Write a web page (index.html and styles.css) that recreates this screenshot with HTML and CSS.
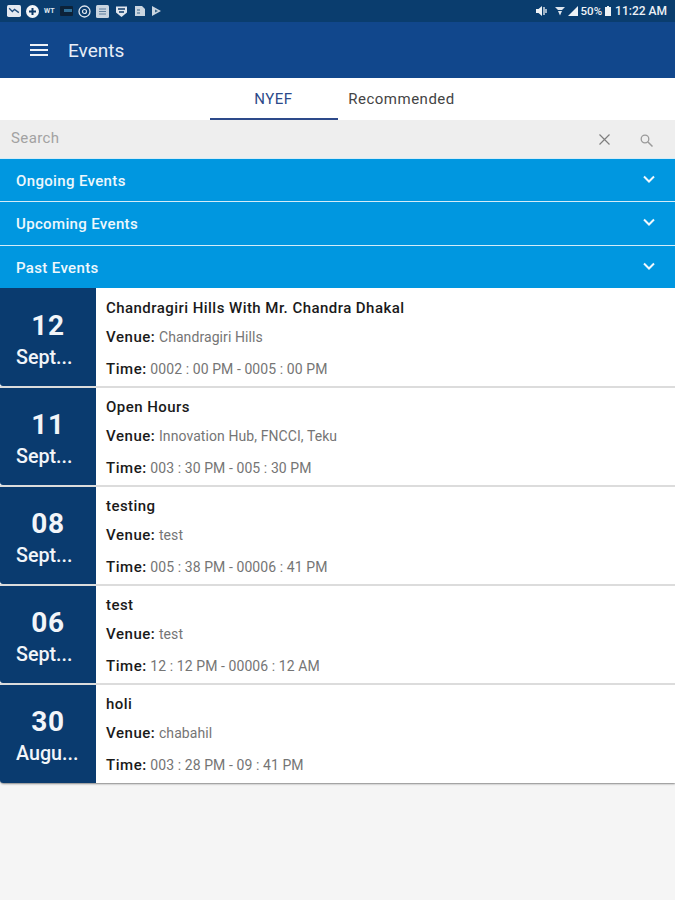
FILE: index.html
```html
<!DOCTYPE html>
<html lang="en">
<head>
<meta charset="utf-8">
<title>Events</title>
<link rel="stylesheet" href="styles.css">
</head>
<body>
<div class="status">
  <div class="status-icons">
    <svg class="si" width="14" height="12" viewBox="0 0 13 11"><rect x="0" y="0" width="13" height="11" rx="1.5" fill="#e4e9f0"/><path d="M2 3l3 3 2-2 4 3" stroke="#1f4c7c" fill="none" stroke-width="1.2"/></svg>
    <svg class="si" width="13" height="13" viewBox="0 0 13 13"><circle cx="6.5" cy="6.5" r="6.5" fill="#f2f5f8"/><path d="M6.5 3v7M3 6.5h7" stroke="#0c3a68" stroke-width="2"/></svg>
    <span class="wt">WT</span>
    <svg class="si" width="13" height="10" viewBox="0 0 13 10"><rect width="13" height="10" rx="1" fill="#0c2238"/><rect x="4" y="3" width="8" height="3" fill="#2f6f98"/></svg>
    <svg class="si" width="13" height="13" viewBox="0 0 13 13"><circle cx="6.5" cy="6.5" r="5.5" fill="none" stroke="#dfe6ee" stroke-width="1.3"/><circle cx="6.5" cy="6.5" r="2" fill="none" stroke="#dfe6ee" stroke-width="1.2"/></svg>
    <svg class="si" width="13" height="13" viewBox="0 0 13 13"><rect width="13" height="13" rx="1.5" fill="#c9d5e0"/><path d="M3 4h7M3 6.5h7M3 9h7" stroke="#5f7f9e"/></svg>
    <svg class="si" width="15" height="13" viewBox="0 0 13 13"><path d="M1 1.5h11v6L6.5 12 1 7.500z" fill="#dfe6ee"/><path d="M3 4h7M4 7h5" stroke="#0c3a68" stroke-width="1.3"/></svg>
    <svg class="si" width="12" height="12" viewBox="0 0 12 12"><path d="M1 1h7l3 3v7H1z" fill="#c9d5e0"/><path d="M3 5h3M3 8h3" stroke="#386488"/></svg>
    <svg class="si" width="11" height="12" viewBox="0 0 11 12"><path d="M1 1l9 5-9 5z" fill="#c9d5e0"/><path d="M4 4.500l3 1.500-3 1.500z" fill="#386488"/></svg>
  </div>
  <div class="status-right">
    <svg width="11" height="10" viewBox="0 0 11 10"><path d="M0 3h2.500L6 0v10L2.500 7H0z" fill="#eef2f6"/><path d="M8 1v8M10 3v4" stroke="#eef2f6" stroke-width="1.300"/></svg>
    <svg class="wifi" width="10" height="10" viewBox="0 0 10 10"><path d="M0 1h10L7 4H3zM3 5h4L5 9.500z" fill="#dfe6ee"/></svg>
    <svg width="10" height="10" viewBox="0 0 10 10"><path d="M0 10L10 0v10z" fill="#eef2f6"/></svg>
    <span>50%</span>
    <svg width="6" height="10" viewBox="0 0 6 10"><path d="M2 0h2v1h2v9H0V1h2z" fill="#eef2f6"/></svg>
    <span class="clock">11:22 AM</span>
  </div>
</div>

<header class="appbar">
  <svg class="menu" width="18" height="12" viewBox="0 0 18 12"><path d="M0 1h18M0 6h18M0 11h18" stroke="#eef2f8" stroke-width="2"/></svg>
  <h1 class="title">Events</h1>
</header>

<nav class="tabs">
  <div class="tab tab-active">NYEF</div>
  <div class="tab">Recommended</div>
</nav>

<div class="search">
  <span class="search-label">Search</span>
  <svg class="clear" width="11" height="11" viewBox="0 0 11 11"><path d="M.5.500l10 10M10.500.500l-10 10" stroke="#7f7f7f" stroke-width="1.200"/></svg>
  <svg class="find" width="13" height="13" viewBox="0 0 13 13"><circle cx="5" cy="5" r="3.800" fill="none" stroke="#9a9a9a" stroke-width="1.300"/><path d="M8 8l4.500 4.500" stroke="#9a9a9a" stroke-width="1.500"/></svg>
</div>

<section class="accordion">
  <div class="acc-row"><span>Ongoing Events</span><svg width="12" height="8" viewBox="0 0 12 8"><path d="M1 1.500l5 5 5-5" fill="none" stroke="#f0f8fd" stroke-width="2"/></svg></div>
  <div class="acc-row"><span>Upcoming Events</span><svg width="12" height="8" viewBox="0 0 12 8"><path d="M1 1.500l5 5 5-5" fill="none" stroke="#f0f8fd" stroke-width="2"/></svg></div>
  <div class="acc-row"><span>Past Events</span><svg width="12" height="8" viewBox="0 0 12 8"><path d="M1 1.500l5 5 5-5" fill="none" stroke="#f0f8fd" stroke-width="2"/></svg></div>
</section>

<main class="events">
  <article class="event">
    <div class="date"><div class="day">12</div><div class="month">Sept...</div></div>
    <div class="info">
      <div class="name">Chandragiri Hills With Mr. Chandra Dhakal</div>
      <div class="line"><b>Venue:</b> Chandragiri Hills</div>
      <div class="line line-time"><b>Time:</b> 0002 : 00 PM - 0005 : 00 PM</div>
    </div>
  </article>
  <article class="event">
    <div class="date"><div class="day">11</div><div class="month">Sept...</div></div>
    <div class="info">
      <div class="name">Open Hours</div>
      <div class="line"><b>Venue:</b> Innovation Hub, FNCCI, Teku</div>
      <div class="line line-time"><b>Time:</b> 003 : 30 PM - 005 : 30 PM</div>
    </div>
  </article>
  <article class="event">
    <div class="date"><div class="day">08</div><div class="month">Sept...</div></div>
    <div class="info">
      <div class="name">testing</div>
      <div class="line"><b>Venue:</b> test</div>
      <div class="line line-time"><b>Time:</b> 005 : 38 PM - 00006 : 41 PM</div>
    </div>
  </article>
  <article class="event">
    <div class="date"><div class="day">06</div><div class="month">Sept...</div></div>
    <div class="info">
      <div class="name">test</div>
      <div class="line"><b>Venue:</b> test</div>
      <div class="line line-time"><b>Time:</b> 12 : 12 PM - 00006 : 12 AM</div>
    </div>
  </article>
  <article class="event">
    <div class="date"><div class="day">30</div><div class="month">Augu...</div></div>
    <div class="info">
      <div class="name">holi</div>
      <div class="line"><b>Venue:</b> chabahil</div>
      <div class="line line-time"><b>Time:</b> 003 : 28 PM - 09 : 41 PM</div>
    </div>
  </article>
</main>
</body>
</html>
```
FILE: styles.css
```css
* { box-sizing: border-box; }
html, body { margin: 0; padding: 0; }
body {
  width: 675px;
  height: 900px;
  overflow: hidden;
  background: #f5f5f5;
  font-family: Roboto, "Liberation Sans", sans-serif;
}
.status {
  height: 22px;
  background: #0a3d6e;
  display: flex;
  align-items: center;
  justify-content: space-between;
  padding: 0 8px 0 7px;
}
.status-icons { display: flex; align-items: center; gap: 5px; }
.wt { color: #dfe6ee; font-size: 7px; font-weight: 700; width: 11px; }
.status-right {
  display: flex;
  align-items: center;
  gap: 3px;
  color: #eef2f6;
  font-size: 11.5px;
  font-weight: 500;
}
.clock { margin-left: 1px; font-size: 12px; }
.wifi { margin: 0 0 0 5px; }
.appbar {
  height: 56px;
  background: #11478c;
  display: flex;
  align-items: center;
  padding-left: 30px;
  gap: 20px;
}
.title { margin: 0; color: #e8eef7; font-size: 19px; font-weight: 400; }
.tabs {
  height: 42px;
  background: #fff;
  display: flex;
  justify-content: center;
}
.tab {
  width: 128px;
  text-align: center;
  font-size: 15px;
  letter-spacing: .5px;
  line-height: 43px;
  color: #444;
}
.tab-active { color: #2d4a8a; border-bottom: 2px solid #2d4a8a; }
.search {
  height: 38px;
  background: #eeeeee;
  display: flex;
  align-items: center;
  padding: 0 22px 0 11px;
}
.search-label { color: #a2a2a2; font-size: 15px; letter-spacing: .4px; margin-right: auto; padding-bottom: 2px; }
.clear { margin: 1px 30px 0 0; }
.find { margin-top: 2px; }
.accordion { display: flex; flex-direction: column; }
.acc-row {
  height: 43.340px;
  background: #0097e0;
  border-top: 1px solid #d4ecf8;
  display: flex;
  align-items: center;
  justify-content: space-between;
  padding: 2px 20px 0 16px;
  color: #eef7fc;
  font-size: 15px;
  letter-spacing: .35px;
  font-weight: 500;
}
.acc-row svg { margin-bottom: 4px; }
.events {
  background: #fff;
  box-shadow: 0 1px 2px rgba(0,0,0,.45);
  border-radius: 0 0 0 4px;
}
.event {
  display: flex;
  height: 99px;
  border-bottom: 2px solid #dcdcdc;
}
.event:first-child { height: 100px; }
.event:last-child { height: 98px; border-bottom: 0; }
.date {
  width: 96px;
  background: #0a3b6f;
  color: #f2f5f9;
  text-align: center;
  padding-top: 21px;
  border-radius: 0 0 0 3px;
}
.event:first-child .date { padding-top: 22px; }
.day { font-size: 28px; font-weight: 700; line-height: 32px; letter-spacing: .6px; }
.month { font-size: 19.700px; font-weight: 500; line-height: 24px; margin-top: 4px; padding-left: 16px; text-align: left; }
.info { padding: 10px 0 0 10px; flex: 1; }
.event:first-child .info { padding-top: 11px; }
.name { font-size: 15px; font-weight: 500; color: #1a1a1a; line-height: 18px; letter-spacing: .45px; }
.line { font-size: 14px; line-height: 18px; margin-top: 11px; color: #757575; letter-spacing: .08px; }
.line-time { margin-top: 14px; }
.line b { font-size: 15px; font-weight: 500; color: #1a1a1a; letter-spacing: .55px; }
```
